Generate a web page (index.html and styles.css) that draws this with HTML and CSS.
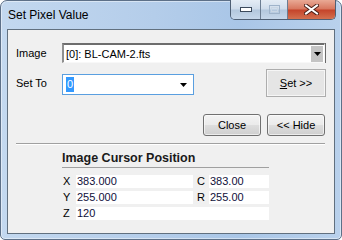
FILE: index.html
```html
<!DOCTYPE html>
<html lang="en">
<head>
  <meta charset="UTF-8">
  <title>Set Pixel Value</title>
  <link rel="stylesheet" href="styles.css">
</head>
<body>

<div class="window">
  <!-- Title bar -->
  <div class="titlebar">
    <span class="title">Set Pixel Value</span>
    <div class="caption-buttons">
      <span class="cap cap-min">
        <svg width="12" height="5" viewBox="0 0 12 5"><rect x="0.5" y="0.5" width="11" height="4" fill="#fff" stroke="#3c4a5c"/></svg>
      </span>
      <span class="cap cap-max">
        <svg width="11" height="9" viewBox="0 0 11 9"><rect x="0.5" y="0.5" width="10" height="8" fill="none" stroke="#9fb3ca"/><rect x="2.5" y="2.5" width="6" height="4" fill="none" stroke="#c9d6e4"/></svg>
      </span>
      <span class="cap cap-close">
        <svg width="15" height="11" viewBox="0 0 15 11"><path d="M2 1.5 L13 9.5 M13 1.5 L2 9.5" stroke="#4b2018" stroke-width="4" stroke-linecap="square"/><path d="M2 1.5 L13 9.5 M13 1.5 L2 9.5" stroke="#fff" stroke-width="2" stroke-linecap="square"/></svg>
      </span>
    </div>
  </div>

  <!-- Client area -->
  <div class="client">
    <div class="form-row">
      <label class="field-label">Image</label>
      <div class="combo combo-image">
        <span class="combo-text">[0]: BL-CAM-2.fts</span>
        <span class="combo-btn">
          <svg width="7" height="4" viewBox="0 0 7 4"><path d="M0 0 H7 L3.5 4 Z" fill="#000"/></svg>
        </span>
      </div>
    </div>

    <div class="form-row set-row">
      <label class="field-label">Set To</label>
      <div class="combo combo-value">
        <span class="selected">0</span>
        <svg class="arrow" width="7" height="4" viewBox="0 0 7 4"><path d="M0 0 H7 L3.5 4 Z" fill="#000"/></svg>
      </div>
      <button class="btn btn-set"><u>S</u>et &gt;&gt;</button>
    </div>

    <div class="actions">
      <button class="btn btn-small">Close</button>
      <button class="btn btn-small">&lt;&lt; Hide</button>
    </div>

    <div class="separator"></div>

    <div class="cursor-panel">
      <div class="panel-title">Image Cursor Position</div>
      <div class="cursor-grid">
        <span class="coord">X</span><span class="value">383.000</span>
        <span class="coord coord-right">C</span><span class="value">383.00</span>
        <span class="coord">Y</span><span class="value">255.000</span>
        <span class="coord coord-right">R</span><span class="value">255.00</span>
        <span class="coord">Z</span><span class="value value-wide">120</span>
      </div>
    </div>
  </div>
</div>

</body>
</html>
```

FILE: styles.css
```css
body {
  margin: 0;
  background: #ffffff;
  font-family: "Liberation Sans", Arial, sans-serif;
  font-size: 11px;
  color: #000;
}
.window {
  width: 342px;
  height: 240px;
  box-sizing: border-box;
  border: 1px solid #5d7088;
  border-radius: 7px 7px 5px 5px;
  background: linear-gradient(to right, #c3d8ef 0%, #b4cdea 45%, #a9c6e7 70%, #b9d1ec 100%);
  padding: 0 6px 5px 6px;
  display: flex;
  flex-direction: column;
  box-shadow: inset 0 0 0 1px rgba(255, 255, 255, 0.45);
}
.titlebar {
  height: 28px;
  display: flex;
  justify-content: space-between;
  align-items: flex-start;
}
.title {
  font-size: 12px;
  line-height: 16px;
  margin-top: 6px;
  padding-left: 1px;
  color: #000;
}
.caption-buttons {
  display: flex;
  margin-top: -1px;
  margin-right: -1px;
  border: 1px solid #4f5f74;
  border-top: none;
  border-radius: 0 0 5px 5px;
  overflow: hidden;
  height: 19px;
}
.cap {
  display: flex;
  align-items: center;
  justify-content: center;
  height: 19px;
}
.cap-min, .cap-max {
  width: 29px;
  background: linear-gradient(#e4ecf5 0%, #cfdceb 48%, #b3c7dd 52%, #c6d7ea 100%);
  border-right: 1px solid #6c7d92;
}
.cap-max {
  width: 26px;
}
.cap-close {
  width: 47px;
  background: linear-gradient(#e9a995 0%, #d7765e 48%, #c4432a 52%, #d3704f 100%);
}
.client {
  flex: 1;
  border: 1px solid #61707f;
  background: #f0f0f0;
  padding: 0 8px 0 8px;
}
.form-row {
  display: flex;
  align-items: center;
  margin-top: 13px;
}
.field-label {
  width: 46px;
}
.combo {
  box-sizing: border-box;
  background: #fff;
  display: flex;
  align-items: center;
}
.combo-image {
  width: 263px;
  height: 20px;
  border-style: solid;
  border-width: 2px 1px 1px 2px;
  border-color: #6d6d6d #f8f8f8 #f8f8f8 #8f8f8f;
  box-shadow: 1px 0 0 #696969;
}
.combo-text {
  flex: 1;
  padding-left: 2px;
}
.combo-btn {
  width: 12px;
  height: 16px;
  background: #c4c4c4;
  display: flex;
  align-items: center;
  justify-content: center;
  margin-right: 1px;
}
.set-row {
  margin-top: 6px;
  align-items: flex-start;
}
.set-row .field-label {
  margin-top: 8px;
}
.combo-value {
  width: 132px;
  height: 21px;
  margin-top: 5px;
  border: 1px solid #5a9fe0;
  padding: 0 6px 0 3px;
  justify-content: space-between;
}
.selected {
  background: #3399ff;
  color: #fff;
  line-height: 15px;
  padding: 0 1px;
}
.btn {
  font-family: "Liberation Sans", Arial, sans-serif;
  font-size: 11px;
  color: #000;
  box-sizing: border-box;
  padding: 0;
  border: 1px solid #707070;
  border-radius: 3px;
  background: linear-gradient(#f3f3f3 0%, #ebebeb 48%, #dddddd 52%, #cfcfcf 100%);
  box-shadow: inset 0 0 0 1px rgba(255, 255, 255, 0.6);
}
.btn-set {
  width: 60px;
  height: 28px;
  margin-left: 72px;
  border-radius: 0;
  border-color: #adadad;
  background: #e5e5e5;
  box-shadow: inset 0 0 0 1px #f6f6f6;
}
.actions {
  display: flex;
  justify-content: flex-end;
  gap: 6px;
  margin-top: 17px;
  margin-right: 1px;
}
.btn-small {
  width: 58px;
  height: 22px;
}
.separator {
  margin-top: 7px;
  margin-right: 1px;
  border-top: 1px solid #a0a0a0;
  border-bottom: 1px solid #ffffff;
}
.cursor-panel {
  margin-left: 46px;
  width: 207px;
}
.panel-title {
  font-size: 12.5px;
  font-weight: bold;
  line-height: 15px;
  margin-top: 6px;
  padding-bottom: 1px;
  border-bottom: 1px solid #a0a0a0;
  color: #1a1a1a;
}
.cursor-grid {
  display: grid;
  grid-template-columns: 14px 117px 16px 60px;
  grid-auto-rows: 13px;
  row-gap: 3px;
  margin-top: 7px;
  line-height: 13px;
}
.coord {
  padding-left: 1px;
}
.coord-right {
  padding-left: 4px;
}
.value {
  background: #fff;
  padding-left: 1px;
  color: #10103a;
}
.value-wide {
  grid-column: span 3;
}
```
